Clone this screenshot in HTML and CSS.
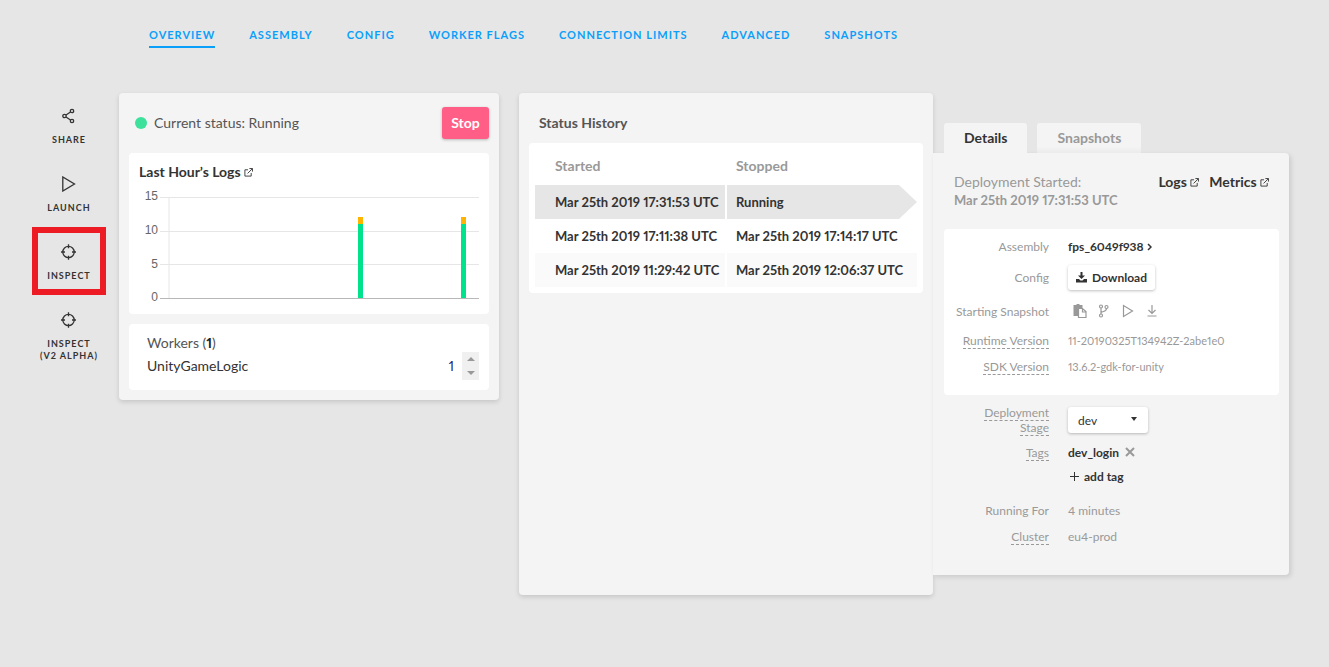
FILE: index.html
```html
<!DOCTYPE html>
<html lang="en">
<head>
<meta charset="utf-8">
<title>Deployment overview</title>
<link rel="stylesheet" href="styles.css">
</head>
<body>
<svg class="defs" aria-hidden="true">
  <symbol id="i-target" viewBox="0 0 16 16"><circle cx="7.500" cy="8" r="5.700"/><path d="M7.500 .3v4M7.500 11.700v4M0 8h4M11 8h4"/></symbol>
  <symbol id="i-play" viewBox="0 0 16 16"><path d="M1.800 1v14L13.500 8z"/></symbol>
  <symbol id="i-ext" viewBox="0 0 10 10"><path d="M4.5 2H1v7h7V5.5M6 .6h3.5V4M9.2.9 4 6"/></symbol>
</svg>

<nav class="topnav" aria-label="Deployment">
  <a class="topnav-link active" href="#overview">OVERVIEW</a>
  <a class="topnav-link" href="#assembly">ASSEMBLY</a>
  <a class="topnav-link" href="#config">CONFIG</a>
  <a class="topnav-link" href="#flags">WORKER FLAGS</a>
  <a class="topnav-link" href="#limits">CONNECTION LIMITS</a>
  <a class="topnav-link" href="#advanced">ADVANCED</a>
  <a class="topnav-link" href="#snapshots">SNAPSHOTS</a>
</nav>

<main class="layout">
  <aside class="sidebar">
    <a class="action" href="#share">
      <svg class="icon16" viewBox="0 0 16 16"><circle cx="3.500" cy="8" r="1.700"/><circle cx="11" cy="3" r="1.700"/><circle cx="11" cy="13" r="1.700"/><path d="M5 7 9.500 4M5 9l4.500 3"/></svg>
      <span>SHARE</span>
    </a>
    <a class="action" href="#launch">
      <svg class="icon16"><use href="#i-play"/></svg>
      <span>LAUNCH</span>
    </a>
    <a class="action highlighted" href="#inspect">
      <svg class="icon16"><use href="#i-target"/></svg>
      <span>INSPECT</span>
    </a>
    <a class="action" href="#inspect-v2">
      <svg class="icon16"><use href="#i-target"/></svg>
      <span>INSPECT<br>(V2 ALPHA)</span>
    </a>
  </aside>

  <section class="card status">
    <header class="status-head">
      <span class="dot"></span>
      <span class="status-text">Current status: Running</span>
      <button class="stop" type="button">Stop</button>
    </header>
    <div class="box logs">
      <a class="ext-link" href="#logs">Last Hour’s Logs <svg class="icon9"><use href="#i-ext"/></svg></a>
      <svg class="chart" viewBox="0 0 340 116" role="img" aria-label="Log counts">
        <g class="gridlines"><path d="M21 13.5h319M21 47.5h319M21 80.5h319M30 13v102"/></g>
        <path class="axis" d="M21 114.5h319"/>
        <g class="ticks"><text x="19" y="16">15</text><text x="19" y="50">10</text><text x="19" y="84">5</text><text x="19" y="117">0</text></g>
        <g class="warn"><rect x="219" y="33" width="5" height="7"/><rect x="322" y="33" width="5" height="7"/></g>
        <g class="info"><rect x="219" y="40" width="5" height="74"/><rect x="322" y="40" width="5" height="74"/></g>
      </svg>
    </div>
    <div class="box workers">
      <div class="workers-title">Workers (<b>1</b>)</div>
      <div class="worker-row">
        <label for="worker-count">UnityGameLogic</label>
        <input id="worker-count" class="count" type="text" value="1">
        <span class="spin">
          <button type="button" aria-label="Increase"><svg viewBox="0 0 8 4"><path d="M0 4h8L4 0z"/></svg></button>
          <button type="button" aria-label="Decrease"><svg viewBox="0 0 8 4"><path d="M0 0h8L4 4z"/></svg></button>
        </span>
      </div>
    </div>
  </section>

  <section class="card history">
    <h2 class="history-title">Status History</h2>
    <div class="box history-box">
      <table class="history-table">
        <thead><tr><th>Started</th><th>Stopped</th></tr></thead>
        <tbody>
          <tr class="current"><td>Mar 25th 2019 17:31:53 UTC</td><td>Running</td></tr>
          <tr><td>Mar 25th 2019 17:11:38 UTC</td><td>Mar 25th 2019 17:14:17 UTC</td></tr>
          <tr class="alt"><td>Mar 25th 2019 11:29:42 UTC</td><td>Mar 25th 2019 12:06:37 UTC</td></tr>
        </tbody>
      </table>
    </div>
  </section>

  <section class="side">
    <div class="tabs" role="tablist">
      <button class="tab selected" type="button" role="tab" aria-selected="true">Details</button>
      <button class="tab" type="button" role="tab" aria-selected="false">Snapshots</button>
    </div>
    <div class="details">
      <header class="details-head">
        <div class="started">Deployment Started:<br><b>Mar 25th 2019 17:31:53 UTC</b></div>
        <a class="ext-link" href="#all-logs">Logs <svg class="icon9"><use href="#i-ext"/></svg></a>
        <a class="ext-link" href="#metrics">Metrics <svg class="icon9"><use href="#i-ext"/></svg></a>
      </header>
      <div class="box fields">
        <div class="row"><span class="key">Assembly</span><a class="strong" href="#fps">fps_6049f938 <svg class="chev" viewBox="0 0 5 8"><path d="m1 1 3 3-3 3"/></svg></a></div>
        <div class="row row-config"><span class="key">Config</span>
          <button class="download" type="button"><svg class="icon11" viewBox="0 0 11 11"><path d="M4.5 0h2v3.5H9L5.500 7 2 3.500h2.500zM0 7h3l1.500 1.500h2L8 7h3v3.500H0z"/></svg>Download</button>
        </div>
        <div class="row row-snapshot"><span class="key">Starting Snapshot</span>
          <span class="tools">
            <button type="button" aria-label="Copy"><svg class="icon14" viewBox="0 0 14 14"><path class="solid" d="M.5 1h3V0h3v1h3v3H5v8H.5z"/><path d="M5.500 4.500h4l3.500 3v6H5.500zM9.500 4.500v3.500H13"/></svg></button>
            <button type="button" aria-label="Branch"><svg class="icon14" viewBox="0 0 14 14"><circle cx="4" cy="2.500" r="1.500"/><circle cx="4" cy="11.500" r="1.500"/><circle cx="9.500" cy="3" r="1.500"/><path d="M4 4v6M9.500 4.500c0 3-3 2.500-5.500 4"/></svg></button>
            <button type="button" aria-label="Launch"><svg class="icon14" viewBox="0 0 14 14"><path d="M2.500 1.500v11L11.500 7z"/></svg></button>
            <button type="button" aria-label="Download snapshot"><svg class="icon14" viewBox="0 0 14 14"><path d="M7 1v8.500M3.500 6 7 9.500 10.500 6M2.500 12h9"/></svg></button>
          </span>
        </div>
        <div class="row"><span class="key"><span class="hint">Runtime Version</span></span><span class="version">11-20190325T134942Z-2abe1e0</span></div>
        <div class="row"><span class="key"><span class="hint">SDK Version</span></span><span class="version">13.6.2-gdk-for-unity</span></div>
      </div>
      <div class="fields-plain">
        <div class="row row-stage"><label class="key" for="stage"><span class="hint">Deployment</span><br><span class="hint">Stage</span></label>
          <span class="select-wrap"><select id="stage" class="stage"><option>dev</option><option>prod</option></select><svg class="caret" viewBox="0 0 6 4"><path d="M0 0h6L3 4z"/></svg></span>
        </div>
        <div class="row"><span class="key"><span class="hint">Tags</span></span>
          <span class="strong tag">dev_login<button type="button" aria-label="Remove tag"><svg class="cross" viewBox="0 0 10 10"><path d="m1 1 8 8M9 1 1 9"/></svg></button></span>
        </div>
        <div class="row row-add"><span></span><button class="add" type="button"><svg class="plus" viewBox="0 0 9 9"><path d="M4.500 0v9M0 4.500h9"/></svg>add tag</button></div>
        <div class="row"><span class="key">Running For</span><span>4 minutes</span></div>
        <div class="row"><span class="key"><span class="hint">Cluster</span></span><span>eu4-prod</span></div>
      </div>
    </div>
  </section>
</main>
</body>
</html>
```

FILE: styles.css
```css
* { box-sizing: border-box; }

body {
  margin: 0;
  min-height: 100vh;
  background: #e6e6e6;
  color: #333;
  font: 13px/18px Lato, "Liberation Sans", sans-serif;
  font-variant-numeric: proportional-nums;
}

a { color: inherit; text-decoration: none; }
button, input, select { margin: 0; padding: 0; border: 0; background: none; color: inherit; font: inherit; }
button { cursor: pointer; }
svg { display: inline-block; fill: none; stroke: currentColor; stroke-width: 1; }

.defs { position: absolute; width: 0; height: 0; }
.icon16 { width: 16px; height: 16px; stroke-width: 1.3; }
.icon14 { width: 14px; height: 14px; stroke-width: 1.2; }
.icon11 { width: 11px; height: 11px; fill: currentColor; stroke: none; }
.icon9 { width: 9px; height: 9px; }

.topnav {
  display: flex;
  gap: 34px;
  padding: 26px 40px 0 149px;
}
.topnav-link {
  height: 22px;
  color: #0aa0fa;
  font-size: 11px;
  font-weight: 700;
  letter-spacing: 1px;
  white-space: nowrap;
}
.topnav-link.active { border-bottom: 2px solid #0aa0fa; }

.layout {
  display: grid;
  grid-template-columns: 87px minmax(0, 400fr) minmax(0, 414fr) minmax(0, 356fr);
  align-items: start;
  padding: 45px 40px 40px 32px;
}

.sidebar { margin: -2px 13px 0 0; }
.action {
  display: flex;
  flex-direction: column;
  align-items: center;
  gap: 10px;
  height: 68px;
  padding-top: 17px;
  font-size: 9px;
  font-weight: 700;
  line-height: 12px;
  letter-spacing: 1px;
  text-align: center;
  white-space: nowrap;
}
.action.highlighted { outline: 6px solid #ed1c24; outline-offset: -6px; }

.card {
  border-radius: 4px;
  background: #f4f4f4;
  box-shadow: 0 2px 5px rgba(0, 0, 0, .14);
}
.box { border-radius: 4px; background: #fff; }

.status { margin-right: 20px; padding: 14px 10px 10px; }
.status-head {
  display: flex;
  align-items: center;
  margin-bottom: 14px;
  padding-left: 6px;
  color: #555;
  font-size: 14px;
}
.dot { width: 12px; height: 12px; margin-right: 7px; border-radius: 50%; background: #3ee19c; }
.stop {
  width: 47px;
  height: 32px;
  margin-left: auto;
  border-radius: 3px;
  background: #ff5f86;
  box-shadow: 0 1px 3px rgba(0, 0, 0, .25);
  color: #fff;
  font-weight: 700;
}

.ext-link { font-weight: 700; white-space: nowrap; }
.logs { margin-bottom: 10px; padding: 10px 10px 14px; font-size: 14px; }
.chart { display: block; width: 100%; margin-top: 3px; overflow: visible; }
.gridlines { stroke: #e6e6e6; }
.axis { stroke: #b8b8b8; }
.ticks { fill: #666; stroke: none; font: 12px "Liberation Sans", sans-serif; text-anchor: end; }
.warn { fill: #ffb400; stroke: none; }
.info { fill: #00e38c; stroke: none; }

.workers { padding: 10px 10px 10px 18px; font-size: 14px; }
.workers-title { color: #555; }
.workers-title b { color: #222; }
.worker-row { display: flex; align-items: center; }
.count { width: 30px; margin-left: auto; padding-right: 8px; color: #226; font-size: 13px; text-align: right; }
.spin { display: flex; flex-direction: column; width: 17px; background: #f0f0f0; color: #999; }
.spin button { display: flex; align-items: center; justify-content: center; height: 14px; }
.spin svg { width: 8px; height: 4px; fill: currentColor; stroke: none; }

.history { min-height: 502px; padding: 21px 10px 10px; }
.history-title { margin: 0 0 11px 10px; color: #555; font-size: 14px; line-height: 18px; }
.history-box { padding: 6px; }
.history-table { width: 100%; border-collapse: collapse; font-size: 13px; font-weight: 700; white-space: nowrap; table-layout: fixed; }
.history-table th { height: 36px; padding: 0 0 2px 9px; color: #999; font-size: 14px; text-align: left; }
.history-table td { height: 34px; padding: 0 0 0 9px; }
.history-table th:first-child,
.history-table td:first-child { padding-left: 20px; border-right: 2px solid #fff; }
.history-table .current td { background: #e6e6e6; }
.history-table .current td:last-child { clip-path: polygon(0 0, calc(100% - 18px) 0, 100% 50%, calc(100% - 18px) 100%, 0 100%); }
.history-table .alt td { background: #fafafa; }

.side { padding-top: 30px; }
.tabs { display: flex; gap: 10px; padding-left: 11px; }
.tab {
  height: 30px;
  padding: 0 20px;
  border-radius: 3px 3px 0 0;
  background: linear-gradient(#f4f4f4 80%, #ebebeb);
  color: #999;
  font-size: 14px;
  font-weight: 700;
}
.tab.selected { background: #f4f4f4; color: #333; }
.details {
  padding: 20px 10px 26px 11px;
  border-radius: 0 4px 4px 0;
  background: #f4f4f4;
  box-shadow: 2px 2px 5px rgba(0, 0, 0, .12);
  color: #999;
  font-size: 12px;
}
.details-head { display: flex; gap: 10px; margin-bottom: 20px; padding: 0 10px; font-size: 14px; }
.started { margin-right: auto; }
.started b { font-size: 13px; }
.details-head .ext-link { color: #333; }

.fields { padding: 4px 0 16px; }
.fields-plain { padding-top: 10px; }
.row {
  display: grid;
  grid-template-columns: 105px 1fr;
  column-gap: 19px;
  align-items: center;
  min-height: 26px;
  line-height: 15px;
}
.row-config { min-height: 36px; }
.row-snapshot { min-height: 32px; }
.row-stage { min-height: 34px; align-items: start; }
.row-add { min-height: 22px; margin-bottom: 10px; }
.key { text-align: right; white-space: nowrap; }
.hint { border-bottom: 1px dashed #999; }
.strong { color: #333; font-weight: 700; }
.version { font-size: 11px; }
.chev { width: 5px; height: 8px; stroke-width: 1.5; }
.download {
  display: flex;
  align-items: center;
  justify-self: start;
  gap: 5px;
  height: 25px;
  padding: 0 8px;
  border-radius: 3px;
  background: #fff;
  box-shadow: 0 1px 3px rgba(0, 0, 0, .25);
  color: #333;
  font-weight: 700;
}
.tools { display: flex; gap: 10px; padding-left: 5px; }
.tools button { display: flex; }
.tools .solid { fill: currentColor; stroke: none; }
.select-wrap { position: relative; justify-self: start; margin-top: 2px; color: #333; }
.stage {
  display: block;
  width: 80px;
  height: 26px;
  padding: 0 24px 0 10px;
  border-radius: 3px;
  background: #fff;
  box-shadow: 0 1px 3px rgba(0, 0, 0, .25);
  appearance: none;
}
.caret { position: absolute; top: 10px; right: 11px; width: 6px; height: 4px; fill: currentColor; stroke: none; pointer-events: none; }
.tag { display: flex; align-items: center; gap: 6px; }
.tag button { display: flex; color: #999; }
.cross { width: 10px; height: 10px; stroke-width: 2; }
.add { display: flex; align-items: center; justify-self: start; gap: 5px; padding-left: 2px; color: #333; font-weight: 700; }
.plus { width: 9px; height: 9px; }
```
